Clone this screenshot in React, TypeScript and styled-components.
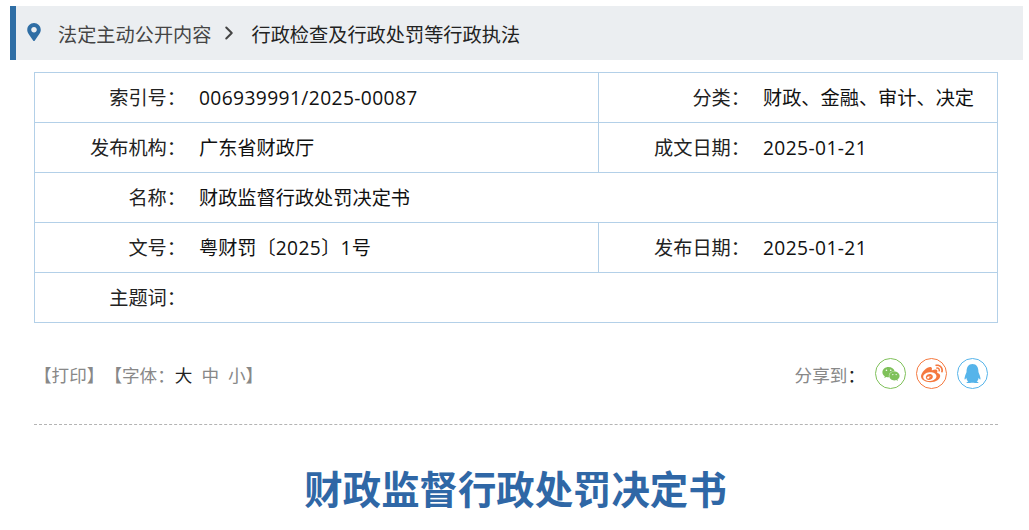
import React from 'react'
import styled, { createGlobalStyle } from 'styled-components'
import { ChevronRight } from 'lucide-react'
import { FaMapMarkerAlt, FaQq, FaWeibo, FaWeixin } from 'react-icons/fa'

const GlobalStyle = createGlobalStyle`
  html, body {
    margin: 0;
    padding: 0;
    background: #fff;
    overflow: hidden;
  }
  body {
    font-family: "Noto Sans CJK SC", "Liberation Sans", sans-serif;
    color: #222;
  }
`

const Page = styled.div`
  width: 1029px;
  height: 530px;
  padding-top: 6px;
  box-sizing: border-box;
  overflow: hidden;
`

const Breadcrumb = styled.div`
  display: flex;
  align-items: center;
  height: 54px;
  width: 1013px;
  margin-left: 10px;
  box-sizing: border-box;
  border-left: 6px solid #2f6ea5;
  background: #ebeef1;
  padding-left: 11px;
  font-size: 19.2px;
`

const Pin = styled(FaMapMarkerAlt)`
  width: 14px;
  height: 18px;
  color: #2f6ea5;
  margin-right: 17px;
  margin-top: -2px;
`

const Crumb = styled.span<{ $current?: boolean }>`
  padding-top: 2px;
  color: ${({ $current }) => ($current ? '#222' : '#444')};
`

const Arrow = styled(ChevronRight)`
  color: #444;
  margin: 0 12px 0 6px;
`

const InfoTable = styled.div`
  width: 964px;
  margin: 12px 0 0 34px;
  box-sizing: border-box;
  border: 1px solid #b3d0e8;
  border-bottom: 0;
`

const Row = styled.div`
  display: flex;
  height: 50px;
  box-sizing: border-box;
  border-bottom: 1px solid #b3d0e8;
  font-size: 19.2px;
  color: #111;
`

const Cell = styled.div<{ $side?: boolean }>`
  display: flex;
  align-items: center;
  box-sizing: border-box;
  width: ${({ $side }) => ($side ? '399px' : '563px')};
  ${({ $side }) => ($side ? 'border-left: 1px solid #b3d0e8;' : '')}
`

const Label = styled.div`
  width: 151px;
  margin-bottom: 2px;
  text-align: right;
  flex-shrink: 0;
  color: #222;
`

const Value = styled.div`
  margin: 0 0 2px 13px;
  white-space: nowrap;
`

const Digits = styled.span`
  font-family: "Open Sans", "Noto Sans CJK SC", sans-serif;
  letter-spacing: 0.4px;
`

const Tools = styled.div`
  display: flex;
  align-items: center;
  justify-content: space-between;
  width: 964px;
  height: 102px;
  margin-left: 34px;
  box-sizing: border-box;
  border-bottom: 1px dashed #b4b4b4;
  padding: 0 10px 0 0;
  font-size: 17.6px;
  color: #888;
`

const ToolLinks = styled.div`
  display: flex;
  align-items: center;
  padding-top: 2px;
  white-space: nowrap;
`

const SizeLink = styled.span<{ $active?: boolean }>`
  margin-right: 9px;
  color: ${({ $active }) => ($active ? '#222' : '#888')};
`

const Share = styled.div`
  display: flex;
  align-items: center;
`

const ShareLabel = styled.span`
  margin-right: 10px;
  padding-top: 2px;
  color: #888;
`

const ShareColon = styled.span`
  color: #222;
`

const ShareButton = styled.a<{ $color: string; $iconSize: number }>`
  display: flex;
  align-items: center;
  justify-content: center;
  width: 31px;
  height: 31px;
  box-sizing: border-box;
  margin-left: 10px;
  border: 1px solid ${({ $color }) => $color};
  border-radius: 50%;
  color: ${({ $color }) => $color};
  font-size: ${({ $iconSize }) => $iconSize}px;

  &:first-child {
    margin-left: 0;
  }
`

const ShareButtons = styled.div`
  display: flex;
`

const Title = styled.h1`
  margin: 34px 0 0;
  width: 1029px;
  box-sizing: border-box;
  padding-left: 2px;
  text-align: center;
  font-size: 38.4px;
  line-height: 56px;
  font-weight: 700;
  color: #2f67a6;
`

const App = () => {
  return (
    <Page>
      <GlobalStyle />
      <Breadcrumb>
        <Pin />
        <Crumb>法定主动公开内容</Crumb>
        <Arrow size={22} strokeWidth={2.2} />
        <Crumb $current>行政检查及行政处罚等行政执法</Crumb>
      </Breadcrumb>

      <InfoTable>
        <Row>
          <Cell>
            <Label>索引号：</Label>
            <Value><Digits>006939991/2025-00087</Digits></Value>
          </Cell>
          <Cell $side>
            <Label>分类：</Label>
            <Value>财政、金融、审计、决定</Value>
          </Cell>
        </Row>
        <Row>
          <Cell>
            <Label>发布机构：</Label>
            <Value>广东省财政厅</Value>
          </Cell>
          <Cell $side>
            <Label>成文日期：</Label>
            <Value><Digits>2025-01-21</Digits></Value>
          </Cell>
        </Row>
        <Row>
          <Cell>
            <Label>名称：</Label>
            <Value>财政监督行政处罚决定书</Value>
          </Cell>
        </Row>
        <Row>
          <Cell>
            <Label>文号：</Label>
            <Value>粤财罚〔<Digits>2025</Digits>〕<Digits>1</Digits>号</Value>
          </Cell>
          <Cell $side>
            <Label>发布日期：</Label>
            <Value><Digits>2025-01-21</Digits></Value>
          </Cell>
        </Row>
        <Row>
          <Cell>
            <Label>主题词：</Label>
          </Cell>
        </Row>
      </InfoTable>

      <Tools>
        <ToolLinks>
          <span>【打印】</span>
          <span>【字体：</span>
          <SizeLink $active>大</SizeLink>
          <SizeLink>中</SizeLink>
          <span>小】</span>
        </ToolLinks>
        <Share>
          <ShareLabel>
            分享到<ShareColon>：</ShareColon>
          </ShareLabel>
          <ShareButtons>
            <ShareButton $color="#7fc15a" $iconSize={18}><FaWeixin /></ShareButton>
            <ShareButton $color="#f5793f" $iconSize={22}><FaWeibo /></ShareButton>
            <ShareButton $color="#56b4ea" $iconSize={19}><FaQq /></ShareButton>
          </ShareButtons>
        </Share>
      </Tools>

      <Title>财政监督行政处罚决定书</Title>
    </Page>
  )
}

export default App
